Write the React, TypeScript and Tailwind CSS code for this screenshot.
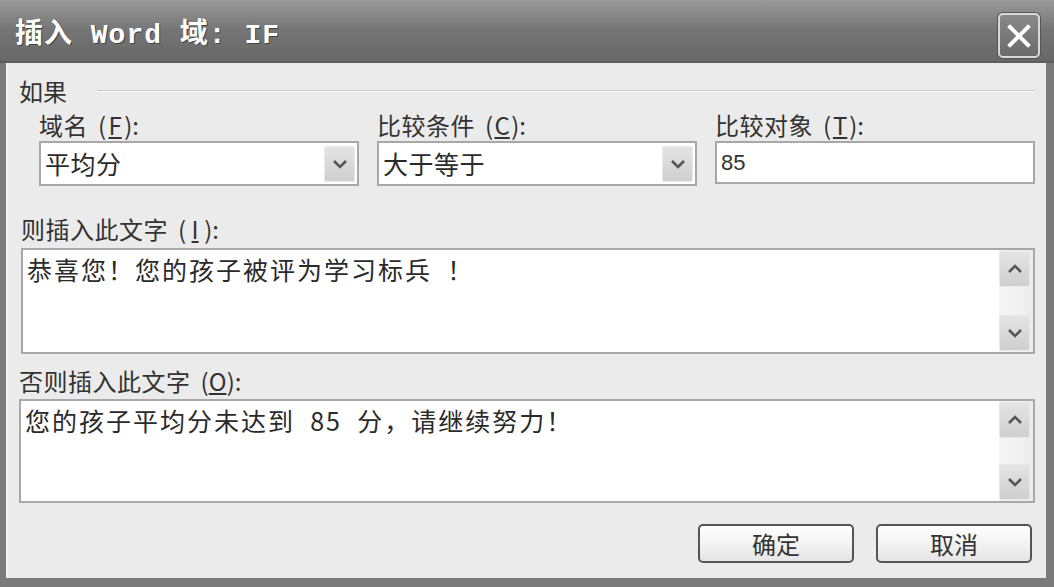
import React from "react";

const cjk = { fontFamily: '"Noto Sans CJK SC", "Noto Sans", sans-serif' };

function DropBtn({ dir }: { dir: "up" | "down" }) {
  return (
    <div className="w-[31px] h-[36px] bg-gradient-to-b from-[#e4e4e4] to-[#cfcfcf] border border-[#e8e8e8] flex items-center justify-center rounded-[2px]">
      <svg width="16" height="10" viewBox="0 0 16 10">
        {dir === "down" ? (
          <path d="M2 2 L8 8 L14 2" fill="none" stroke="#555" strokeWidth="2.6" />
        ) : (
          <path d="M2 8 L8 2 L14 8" fill="none" stroke="#555" strokeWidth="2.6" />
        )}
      </svg>
    </div>
  );
}

function Combo({ value }: { value: string }) {
  return (
    <div className="h-[45px] border-2 border-[#a8a8a8] bg-white flex items-center justify-between pl-[4px] pr-[2px]">
      <span className="text-[25px] text-[#2a2a2a] leading-none tracking-[0.5px]">{value}</span>
      <DropBtn dir="down" />
    </div>
  );
}

function TextArea({ value, h }: { value: string; h: string }) {
  return (
    <div className={`${h} border-2 border-[#a8a8a8] bg-white flex`}>
      <div className="flex-1 pl-[4px] pt-[3px] text-[25px] leading-[32px] tracking-[2px] text-[#2a2a2a] whitespace-pre">{value}</div>
      <div className="w-[34px] flex flex-col justify-between py-[1px] pr-[2px] bg-gradient-to-r from-[#f6f6f6] to-[#ececec]">
        <DropBtn dir="up" />
        <DropBtn dir="down" />
      </div>
    </div>
  );
}

function Label({ text, k }: { text: string; k: string }) {
  return (
    <span className="whitespace-nowrap">
      <span className="tracking-[0.5px]">{text}</span>
      <span className="ml-[10px]">(</span>
      <u className="inline-block w-[18px] text-center">{k}</u>
      <span>):</span>
    </span>
  );
}

export default function App() {
  return (
    <div className="w-[1054px] h-[587px] bg-[#5a5a5a] flex flex-col overflow-hidden" style={cjk}>
      {/* Title bar */}
      <div className="h-[63px] bg-gradient-to-b from-[#9a9a9a] via-[#747474] to-[#686868] flex items-center justify-between pl-[15px] pr-[14px] border-b-2 border-[#5e5e5e]">
        <div
          className="text-white text-[28px] font-bold tracking-[1px] pt-[10px]"
          style={{ fontFamily: '"Liberation Mono", "Noto Sans CJK SC", monospace', textShadow: "1px 1px 0 #444" }}
        >
          插入 Word 域: IF
        </div>
        <div className="w-[42px] h-[45px] mt-[10px] rounded-[5px] border-2 border-[#d8d8d8] bg-gradient-to-b from-[#8a8a8a] to-[#6a6a6a] flex items-center justify-center shadow-[0_0_0_1px_#555]">
          <svg width="26" height="26" viewBox="0 0 26 26">
            <path d="M4 4 L22 22 M22 4 L4 22" stroke="white" strokeWidth="4" strokeLinecap="square" />
          </svg>
        </div>
      </div>

      {/* Body */}
      <div className="flex-1 flex pl-[6px] pr-[8px] pb-[9px] bg-[#7a7a7a]">
        <div className="flex-1 bg-[#ebebeb] pl-[12px] pr-[11px] pt-[14px] flex flex-col border-l border-[#f8f8f8]">
          {/* group header */}
          <div className="flex items-center h-[28px]">
            <span className="text-[24px] text-[#333] leading-none">如果</span>
            <div className="flex-1 ml-[30px] h-[2px] bg-[#c8c8c8] border-b border-white" />
          </div>

          {/* three columns */}
          <div className="grid grid-cols-3 gap-x-[18px] pl-[20px] mt-[5px]">
            <div className="flex flex-col">
              <div className="text-[24px] text-[#333] leading-[30px] h-[31px]"><Label text="域名" k="F" /></div>
              <Combo value="平均分" />
            </div>
            <div className="flex flex-col">
              <div className="text-[24px] text-[#333] leading-[30px] h-[31px]"><Label text="比较条件" k="C" /></div>
              <Combo value="大于等于" />
            </div>
            <div className="flex flex-col">
              <div className="text-[24px] text-[#333] leading-[30px] h-[31px]"><Label text="比较对象" k="T" /></div>
              <div className="h-[43px] border-2 border-[#a8a8a8] bg-white flex items-center pl-[4px]">
                <span className="text-[22px] text-[#333]" style={{ fontFamily: '"Liberation Sans", sans-serif' }}>85</span>
              </div>
            </div>
          </div>

          <div className="pl-[2px] mt-[28px] text-[24px] text-[#333] leading-[30px] h-[34px]"><Label text="则插入此文字" k="I" /></div>
          <div className="pl-[2px]">
            <TextArea h="h-[106px]" value="恭喜您！您的孩子被评为学习标兵  ！" />
          </div>

          <div className="mt-[12px] text-[24px] text-[#333] leading-[30px] h-[33px]"><Label text="否则插入此文字" k="O" /></div>
          <TextArea h="h-[104px]" value="您的孩子平均分未达到  85  分，请继续努力！" />

          <div className="flex justify-end gap-[22px] mt-[21px] pr-[3px]">
            <button className="w-[156px] h-[39px] rounded-[5px] border-2 border-[#555] bg-gradient-to-b from-white to-[#e6e6e6] text-[24px] text-[#333] leading-none">确定</button>
            <button className="w-[156px] h-[39px] rounded-[5px] border-2 border-[#555] bg-gradient-to-b from-white to-[#e6e6e6] text-[24px] text-[#333] leading-none">取消</button>
          </div>
        </div>
      </div>
    </div>
  );
}
